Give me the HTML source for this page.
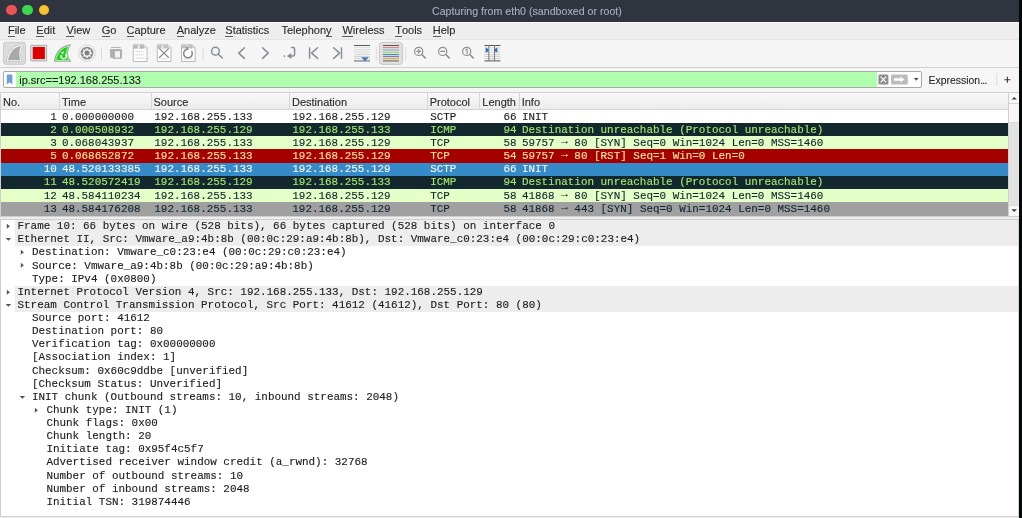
<!DOCTYPE html>
<html><head><meta charset="utf-8"><style>
*{margin:0;padding:0;box-sizing:border-box}
html,body{width:1022px;height:518px;overflow:hidden;background:#eeeeee}
body{will-change:transform}
body{position:relative;font-family:"Liberation Sans",sans-serif;font-size:11px;color:#2e2e2e}
.a{position:absolute}
.mono{font-family:"Liberation Mono",monospace;font-size:10.93px;white-space:pre;-webkit-text-stroke:0.15px}
.t{position:absolute;white-space:pre;line-height:13px;-webkit-text-stroke:0.12px}
.mi{position:absolute;top:24px;line-height:13px;color:#2b2b2b;-webkit-text-stroke:0.12px}
.mi u{text-decoration:none;border-bottom:1px solid #5a5a5a;display:inline-block;line-height:11px}
.sep{position:absolute;width:1px;background:#d6d6d6}
</style></head><body>

<div class="a" style="left:0;top:0;width:1019px;height:22px;background:#2f343f"></div>
<div class="a" style="left:0;top:22px;width:1019px;height:1px;background:#fafafa"></div>
<div class="a" style="left:6.199999999999999px;top:4.7px;width:10.8px;height:10.8px;border-radius:50%;background:#ef5252"></div>
<div class="a" style="left:22.4px;top:4.7px;width:10.8px;height:10.8px;border-radius:50%;background:#3ad84f"></div>
<div class="a" style="left:38.5px;top:4.7px;width:10.8px;height:10.8px;border-radius:50%;background:#f8c22c"></div>
<div class="t" style="left:432px;top:5px;font-size:10.65px;color:#a6b0bf">Capturing from eth0 (sandboxed or root)</div>
<div class="a" style="left:1019px;top:0;width:3px;height:518px;background:#03080a"></div>
<div class="a" style="left:0;top:23px;width:1019px;height:16px;background:#eeeeee"></div>
<div class="mi" style="left:7.9px"><u>F</u>ile</div>
<div class="mi" style="left:36.3px"><u>E</u>dit</div>
<div class="mi" style="left:66.4px"><u>V</u>iew</div>
<div class="mi" style="left:101.8px"><u>G</u>o</div>
<div class="mi" style="left:126.5px"><u>C</u>apture</div>
<div class="mi" style="left:176.7px"><u>A</u>nalyze</div>
<div class="mi" style="left:225.3px"><u>S</u>tatistics</div>
<div class="mi" style="left:281.4px">Telephon<u>y</u></div>
<div class="mi" style="left:342.4px"><u>W</u>ireless</div>
<div class="mi" style="left:395.2px"><u>T</u>ools</div>
<div class="mi" style="left:432.8px"><u>H</u>elp</div>
<div class="a" style="left:0;top:39px;width:1019px;height:1px;background:#e4e4e4"></div>
<div class="a" style="left:0;top:40px;width:1019px;height:27px;background:#f5f5f5"></div>
<div class="a" style="left:0;top:67px;width:1019px;height:1px;background:#d0d0d0"></div>
<svg class="a" style="left:0;top:0" width="520" height="68" viewBox="0 0 520 68">
<!-- pressed start button -->
<rect x="3.5" y="42.3" width="22" height="22" rx="2.2" fill="#dcdcdc" stroke="#cacaca" stroke-width="1"/>
<path d="M7.3 60.8 C8.8 52.5 13.8 46.3 22.2 44.9 C20.3 48 19.7 51 19.8 54 C19.9 57 20.4 59 21.1 60.8 Z" fill="#a9a9a9" stroke="#bdbdbd" stroke-width="2.2" stroke-linejoin="round"/>
<path d="M7.3 60.8 C8.8 52.5 13.8 46.3 22.2 44.9 C20.3 48 19.7 51 19.8 54 C19.9 57 20.4 59 21.1 60.8 Z" fill="#a9a9a9" stroke="#f7f7f7" stroke-width="1.1" stroke-linejoin="round"/>
<!-- stop -->
<rect x="30.8" y="45.3" width="15.8" height="15.6" rx="0.3" fill="#e8e8e8" stroke="#a9a9a9" stroke-width="1"/>
<rect x="32.7" y="46.9" width="12.2" height="12.2" fill="#dd0000"/>
<!-- restart green fin -->
<path d="M54.5 61.3 C55.8 52.5 61 46.2 70.4 44.8 C68 48.5 67.2 53 67.6 55.5 C67.9 58 69.5 60 70.5 61.3 Z" fill="#22d022" stroke="#a6a6a6" stroke-width="1.1" stroke-linejoin="round"/>
<path d="M55.7 60.6 C57 53 61.6 47.3 69 45.9 C66.8 49.5 66.2 53 66.6 55.5 C66.9 57.8 68 59.5 69 60.6 Z" fill="none" stroke="#ecffe6" stroke-width="0.7" stroke-linejoin="round"/>
<path d="M61.4 55 A2.6 2.6 0 1 0 65.4 54.2" fill="none" stroke="#f4fff0" stroke-width="1.4"/>
<path d="M60.6 52.2 L63.8 51.4 L63 54.6 Z" fill="#f4fff0"/>
<!-- gear -->
<circle cx="87.0" cy="53.1" r="8.3" fill="#f7f7f7" stroke="#d2d2d2" stroke-width="0.9"/>
<circle cx="87.0" cy="53.1" r="6.4" fill="#8c8c8c"/>
<path d="M85.51 49.50 L86.33 49.26 L86.44 48.03 L87.56 48.03 L87.67 49.26 L88.49 49.50 L89.24 49.91 L90.19 49.12 L90.98 49.91 L90.19 50.86 L90.60 51.61 L90.84 52.43 L92.07 52.54 L92.07 53.66 L90.84 53.77 L90.60 54.59 L90.19 55.34 L90.98 56.29 L90.19 57.08 L89.24 56.29 L88.49 56.70 L87.67 56.94 L87.56 58.17 L86.44 58.17 L86.33 56.94 L85.51 56.70 L84.76 56.29 L83.81 57.08 L83.02 56.29 L83.81 55.34 L83.40 54.59 L83.16 53.77 L81.93 53.66 L81.93 52.54 L83.16 52.43 L83.40 51.61 L83.81 50.86 L83.02 49.91 L83.81 49.12 L84.76 49.91Z" fill="#f6f6f6"/>
<circle cx="87.0" cy="53.1" r="2.5" fill="#7f7f7f"/>
<!-- separators -->
<rect x="101" y="47" width="1" height="13.5" fill="#dcdcdc"/>
<rect x="202.6" y="47" width="1" height="13.5" fill="#dcdcdc"/>
<rect x="375.8" y="47" width="1" height="13.5" fill="#dcdcdc"/>
<rect x="405.1" y="47" width="1" height="13.5" fill="#dcdcdc"/>
<!-- open -->
<rect x="111" y="47" width="9.6" height="1" fill="#b4b4b4"/>
<rect x="110" y="49" width="11.8" height="8.8" fill="#b0b0b0"/>
<rect x="113" y="51" width="8.8" height="7.8" fill="#adadad"/>
<rect x="114.8" y="51.2" width="5.2" height="6.4" fill="#f4f4f4"/>
<!-- save file -->
<g>
<path d="M133.3 44.8 H144 L147 47.8 V61.5 H133.3 Z" fill="#ffffff" stroke="#b9b9b9" stroke-width="1"/>
<rect x="133.8" y="45.3" width="10" height="3.4" fill="#b4b4b4"/>
<path d="M137 48.7 L138.6 45.3 H139.8 L139.2 48.7Z" fill="#fff"/>
<path d="M144 44.8 V47.8 H147" fill="#e6e6e6" stroke="#b9b9b9" stroke-width="0.8"/>
<g stroke="#cdcdcd" stroke-width="1.3" stroke-dasharray="1.1 0.6"><path d="M135.6 51.6 H144.4 M135.6 54.9 H144.4 M135.6 58.2 H144.4"/></g>
</g>
<!-- close file -->
<g>
<path d="M157.3 44.8 H168 L171 47.8 V61.5 H157.3 Z" fill="#ffffff" stroke="#b9b9b9" stroke-width="1"/>
<rect x="157.8" y="45.3" width="10" height="3.2" fill="#bdbdbd"/>
<path d="M161.2 48.5 L162.5 45.3 H163.6 L163 48.5Z" fill="#fff"/>
<path d="M168 44.8 V47.8 H171" fill="#e6e6e6" stroke="#b9b9b9" stroke-width="0.8"/>
<g stroke="#d6d6d6" stroke-width="1.2" stroke-dasharray="1 0.7"><path d="M159.7 58.9 H168.1"/></g>
<path d="M159.2 48.4 L168.8 57.8 M168.8 48.4 L159.2 57.8" stroke="#8c8c8c" stroke-width="1.3"/>
</g>
<!-- reload file -->
<g>
<path d="M181.5 44.8 H192.2 L195.2 47.8 V61.5 H181.5 Z" fill="#ffffff" stroke="#b9b9b9" stroke-width="1"/>
<rect x="182" y="45.3" width="10" height="3.2" fill="#bdbdbd"/>
<path d="M185.6 48.5 L186.9 45.3 H188 L187.4 48.5Z" fill="#fff"/>
<path d="M192.2 44.8 V47.8 H195.2" fill="#e6e6e6" stroke="#b9b9b9" stroke-width="0.8"/>
<g stroke="#d6d6d6" stroke-width="1.2" stroke-dasharray="1 0.7"><path d="M184 58.9 H192.4"/></g>
<path d="M191.6 51.2 A4.3 4.3 0 1 1 187.6 49.2 L186.6 46.4" fill="none" stroke="#8a8a8a" stroke-width="1.5"/>
</g>
<!-- search, nav -->
<g fill="none" stroke="#878d96" stroke-width="1.5" stroke-linecap="round" stroke-linejoin="round">
<circle cx="215.4" cy="51.2" r="3.9"/>
<path d="M218.3 54.2 L222.4 58"/>
<path d="M244.4 47.8 L238.8 53.1 L244.4 58.4"/>
<path d="M262.6 47.8 L268.2 53.1 L262.6 58.4"/>
<path d="M291.6 47.6 H293.2 Q294.6 47.6 294.6 49 V54.6 Q294.6 56 293.2 56 H290"/>
<path d="M309.6 47.3 V58.8" stroke-linecap="butt"/>
<path d="M317.6 47.8 L311.6 53.1 L317.6 58.4"/>
<path d="M341.5 47.3 V58.8" stroke-linecap="butt"/>
<path d="M333.6 47.8 L339.6 53.1 L333.6 58.4"/>
</g>
<path d="M286.9 56 L291.3 53 V59 Z" fill="#878d96"/>
<circle cx="284.4" cy="56.1" r="0.85" fill="#878d96"/>
<!-- autoscroll -->
<g>
<rect x="354" y="45" width="16" height="1" fill="#5a5a5a"/>
<g fill="#dedede"><rect x="354" y="47" width="16" height="0.9"/><rect x="354" y="49" width="16" height="0.9"/><rect x="354" y="50.6" width="16" height="0.9"/><rect x="354" y="52.2" width="16" height="0.9"/></g>
<g fill="#cfcfcf"><rect x="354" y="54.2" width="16" height="0.9"/><rect x="354" y="56" width="16" height="0.9"/><rect x="354" y="57.9" width="16" height="0.9"/></g>
<rect x="354" y="60.2" width="16" height="1.4" fill="#8c8c8c"/>
<path d="M361.2 57.2 H368.8 L365 61.2 Z" fill="#3b78c2"/>
</g>
<!-- colorize pressed -->
<rect x="379.4" y="42.4" width="23" height="22" rx="3" fill="#e0e0e0" stroke="#c6c6c6" stroke-width="1"/>
<rect x="383" y="45" width="16" height="1" fill="#555"/>
<rect x="383" y="47.1" width="16" height="1" fill="#f07575"/>
<rect x="383" y="49.2" width="16" height="1.5" fill="#a3b9d6"/>
<rect x="383" y="51.7" width="16" height="1.1" fill="#92e070"/>
<rect x="383" y="54" width="16" height="1.1" fill="#3f8ec2"/>
<rect x="383" y="56" width="16" height="1.1" fill="#9474a6"/>
<rect x="383" y="58.1" width="16" height="1.1" fill="#d8b040"/>
<rect x="383" y="60.1" width="16" height="1.6" fill="#8e8e8e"/>
<!-- zoom -->
<g fill="none" stroke="#8f8f8f" stroke-width="1.15" stroke-linecap="round">
<circle cx="418.7" cy="51.4" r="4.1"/><path d="M421.8 54.5 L425.3 58" stroke-width="1.6"/><path d="M416.9 51.4 H420.5 M418.7 49.6 V53.2" stroke-width="1.3"/>
<circle cx="442.7" cy="51.4" r="4.1"/><path d="M445.8 54.5 L449.3 58" stroke-width="1.6"/><path d="M440.9 51.4 H444.5" stroke-width="1.3"/>
<circle cx="466.7" cy="51.4" r="4.1"/><path d="M469.8 54.5 L473.3 58" stroke-width="1.6"/><path d="M465.9 49.9 L467 49.2 V53.6" stroke-width="1.1"/>
</g>
<!-- resize columns -->
<g>
<rect x="484.4" y="45" width="16" height="1" fill="#555"/>
<g fill="#dadada"><rect x="484.4" y="47.4" width="16" height="0.9"/><rect x="484.4" y="49.8" width="16" height="0.9"/><rect x="484.4" y="52.2" width="16" height="0.9"/></g>
<g fill="#cdcdcd"><rect x="484.4" y="54.3" width="16" height="0.9"/><rect x="484.4" y="56.2" width="16" height="0.9"/><rect x="484.4" y="58.2" width="16" height="0.9"/></g>
<rect x="484.4" y="60.2" width="16" height="1.3" fill="#7a7a7a"/>
<rect x="488.3" y="45" width="1" height="16" fill="#7a7a7a"/>
<rect x="494" y="45" width="1" height="16" fill="#7a7a7a"/>
<path d="M485.6 47.6 Q488.6 48.8 488.6 50.2 Q488.6 51.6 485.6 52.8Z" fill="#2f6fc0"/>
<path d="M497.4 47.6 Q494.4 48.8 494.4 50.2 Q494.4 51.6 497.4 52.8Z" fill="#2f6fc0"/>
</g>
</svg>

<div class="a" style="left:0;top:68px;width:1019px;height:24px;background:#f6f6f6"></div>
<div class="a" style="left:3px;top:71px;width:919px;height:17px;border:1px solid #a8a8a8;border-radius:2px;background:#fff"></div>
<div class="a" style="left:16.4px;top:72px;width:860.6px;height:15px;background:#afffaf"></div>
<div class="t" style="left:19.2px;top:74px;color:#1a1a1a">ip.src==192.168.255.133</div>
<div class="t" style="left:928.5px;top:74px;color:#2b2b2b;font-size:10.45px">Expression<span style="letter-spacing:-0.7px">...</span></div>
<svg class="a" style="left:0;top:66px" width="1019" height="26" viewBox="0 66 1019 26">
<path d="M6.8 74.6 H12.4 V84.6 L9.6 82.2 L6.8 84.6 Z" fill="#6f9ed6"/>
<rect x="878.4" y="74.5" width="10" height="10" rx="1.5" fill="#8c8c8c"/>
<path d="M880.6 76.7 L886.2 82.3 M886.2 76.7 L880.6 82.3" stroke="#fff" stroke-width="1.1"/>
<rect x="891" y="74.5" width="16.8" height="10" rx="1.5" fill="#bcbcbc"/>
<path d="M894 78.3 H900.5 V76.4 L904.5 79.5 L900.5 82.6 V80.7 H894 Z" fill="#fff"/>
<path d="M913.9 78 H918.6 L916.25 80.7 Z" fill="#444"/>
<rect x="996.3" y="73" width="1" height="13" fill="#dddddd"/>
<path d="M1004.4 79.7 H1010.4 M1007.4 76.7 V82.7" stroke="#3a3a3a" stroke-width="1.1"/>
</svg>

<div class="a" style="left:0;top:92px;width:1019px;height:125px;background:#ffffff;border:1px solid #cfcfcf"></div>
<div class="a" style="left:1px;top:93px;width:1007px;height:16px;background:linear-gradient(#f8f8f8,#ececec)"></div>
<div class="a" style="left:1px;top:109px;width:1007px;height:1px;background:#d3d3d3"></div>
<div class="sep" style="left:59px;top:93px;height:16px"></div>
<div class="sep" style="left:151px;top:93px;height:16px"></div>
<div class="sep" style="left:289px;top:93px;height:16px"></div>
<div class="sep" style="left:427px;top:93px;height:16px"></div>
<div class="sep" style="left:479px;top:93px;height:16px"></div>
<div class="sep" style="left:519px;top:93px;height:16px"></div>
<div class="t" style="left:3px;top:96px;color:#2b2b2b">No.</div>
<div class="t" style="left:62px;top:96px;color:#2b2b2b">Time</div>
<div class="t" style="left:153.5px;top:96px;color:#2b2b2b">Source</div>
<div class="t" style="left:292px;top:96px;color:#2b2b2b">Destination</div>
<div class="t" style="left:429.7px;top:96px;color:#2b2b2b">Protocol</div>
<div class="t" style="left:482.3px;top:96px;color:#2b2b2b">Length</div>
<div class="t" style="left:521.7px;top:96px;color:#2b2b2b">Info</div>
<div class="a" style="left:1px;top:110.000px;width:1007px;height:13.125px;background:#ffffff"></div>
<div class="t mono" style="right:965.2px;top:110.800px;color:#1c1c1c">1</div>
<div class="t mono" style="left:61.9px;top:110.800px;color:#1c1c1c">0.000000000</div>
<div class="t mono" style="left:154.3px;top:110.800px;color:#1c1c1c">192.168.255.133</div>
<div class="t mono" style="left:292.3px;top:110.800px;color:#1c1c1c">192.168.255.129</div>
<div class="t mono" style="left:430.2px;top:110.800px;color:#1c1c1c">SCTP</div>
<div class="t mono" style="right:505.5px;top:110.800px;color:#1c1c1c">66</div>
<div class="t mono" style="left:521.9px;top:110.800px;color:#1c1c1c">INIT</div>
<div class="a" style="left:1px;top:123.125px;width:1007px;height:13.125px;background:#12272e"></div>
<div class="t mono" style="right:965.2px;top:123.925px;color:#a4e46c">2</div>
<div class="t mono" style="left:61.9px;top:123.925px;color:#a4e46c">0.000508932</div>
<div class="t mono" style="left:154.3px;top:123.925px;color:#a4e46c">192.168.255.129</div>
<div class="t mono" style="left:292.3px;top:123.925px;color:#a4e46c">192.168.255.133</div>
<div class="t mono" style="left:430.2px;top:123.925px;color:#a4e46c">ICMP</div>
<div class="t mono" style="right:505.5px;top:123.925px;color:#a4e46c">94</div>
<div class="t mono" style="left:521.9px;top:123.925px;color:#a4e46c">Destination unreachable (Protocol unreachable)</div>
<div class="a" style="left:1px;top:136.250px;width:1007px;height:13.125px;background:#e4ffc7"></div>
<div class="t mono" style="right:965.2px;top:137.050px;color:#12272e">3</div>
<div class="t mono" style="left:61.9px;top:137.050px;color:#12272e">0.068043937</div>
<div class="t mono" style="left:154.3px;top:137.050px;color:#12272e">192.168.255.133</div>
<div class="t mono" style="left:292.3px;top:137.050px;color:#12272e">192.168.255.129</div>
<div class="t mono" style="left:430.2px;top:137.050px;color:#12272e">TCP</div>
<div class="t mono" style="right:505.5px;top:137.050px;color:#12272e">58</div>
<div class="t mono" style="left:521.9px;top:137.050px;color:#12272e">59757 <span style=position:relative;top:-1.7px>→</span> 80 [SYN] Seq=0 Win=1024 Len=0 MSS=1460</div>
<div class="a" style="left:1px;top:149.375px;width:1007px;height:13.125px;background:#a40000"></div>
<div class="t mono" style="right:965.2px;top:150.175px;color:#fbe596">5</div>
<div class="t mono" style="left:61.9px;top:150.175px;color:#fbe596">0.068652872</div>
<div class="t mono" style="left:154.3px;top:150.175px;color:#fbe596">192.168.255.133</div>
<div class="t mono" style="left:292.3px;top:150.175px;color:#fbe596">192.168.255.129</div>
<div class="t mono" style="left:430.2px;top:150.175px;color:#fbe596">TCP</div>
<div class="t mono" style="right:505.5px;top:150.175px;color:#fbe596">54</div>
<div class="t mono" style="left:521.9px;top:150.175px;color:#fbe596">59757 <span style=position:relative;top:-1.7px>→</span> 80 [RST] Seq=1 Win=0 Len=0</div>
<div class="a" style="left:1px;top:162.500px;width:1007px;height:13.125px;background:#358bc7"></div>
<div class="t mono" style="right:965.2px;top:163.300px;color:#f4f8fc">10</div>
<div class="t mono" style="left:61.9px;top:163.300px;color:#f4f8fc">48.520133385</div>
<div class="t mono" style="left:154.3px;top:163.300px;color:#f4f8fc">192.168.255.133</div>
<div class="t mono" style="left:292.3px;top:163.300px;color:#f4f8fc">192.168.255.129</div>
<div class="t mono" style="left:430.2px;top:163.300px;color:#f4f8fc">SCTP</div>
<div class="t mono" style="right:505.5px;top:163.300px;color:#f4f8fc">66</div>
<div class="t mono" style="left:521.9px;top:163.300px;color:#f4f8fc">INIT</div>
<div class="a" style="left:1px;top:175.625px;width:1007px;height:13.125px;background:#12272e"></div>
<div class="t mono" style="right:965.2px;top:176.425px;color:#a4e46c">11</div>
<div class="t mono" style="left:61.9px;top:176.425px;color:#a4e46c">48.520572419</div>
<div class="t mono" style="left:154.3px;top:176.425px;color:#a4e46c">192.168.255.129</div>
<div class="t mono" style="left:292.3px;top:176.425px;color:#a4e46c">192.168.255.133</div>
<div class="t mono" style="left:430.2px;top:176.425px;color:#a4e46c">ICMP</div>
<div class="t mono" style="right:505.5px;top:176.425px;color:#a4e46c">94</div>
<div class="t mono" style="left:521.9px;top:176.425px;color:#a4e46c">Destination unreachable (Protocol unreachable)</div>
<div class="a" style="left:1px;top:188.750px;width:1007px;height:13.125px;background:#e4ffc7"></div>
<div class="t mono" style="right:965.2px;top:189.550px;color:#12272e">12</div>
<div class="t mono" style="left:61.9px;top:189.550px;color:#12272e">48.584110234</div>
<div class="t mono" style="left:154.3px;top:189.550px;color:#12272e">192.168.255.133</div>
<div class="t mono" style="left:292.3px;top:189.550px;color:#12272e">192.168.255.129</div>
<div class="t mono" style="left:430.2px;top:189.550px;color:#12272e">TCP</div>
<div class="t mono" style="right:505.5px;top:189.550px;color:#12272e">58</div>
<div class="t mono" style="left:521.9px;top:189.550px;color:#12272e">41868 <span style=position:relative;top:-1.7px>→</span> 80 [SYN] Seq=0 Win=1024 Len=0 MSS=1460</div>
<div class="a" style="left:1px;top:201.875px;width:1007px;height:14.2px;background:#a0a0a0"></div>
<div class="t mono" style="right:965.2px;top:202.675px;color:#12272e">13</div>
<div class="t mono" style="left:61.9px;top:202.675px;color:#12272e">48.584176208</div>
<div class="t mono" style="left:154.3px;top:202.675px;color:#12272e">192.168.255.133</div>
<div class="t mono" style="left:292.3px;top:202.675px;color:#12272e">192.168.255.129</div>
<div class="t mono" style="left:430.2px;top:202.675px;color:#12272e">TCP</div>
<div class="t mono" style="right:505.5px;top:202.675px;color:#12272e">58</div>
<div class="t mono" style="left:521.9px;top:202.675px;color:#12272e">41868 <span style=position:relative;top:-1.7px>→</span> 443 [SYN] Seq=0 Win=1024 Len=0 MSS=1460</div>
<div class="a" style="left:1008px;top:93px;width:11px;height:123px;background:#e2e2e2;border-left:1px solid #d0d0d0"></div>
<div class="a" style="left:1009px;top:93px;width:10px;height:10.5px;background:#f8f8f8;border-bottom:1px solid #d8d8d8"></div>
<div class="a" style="left:1009px;top:104px;width:10px;height:19px;background:#f6f6f6;border-bottom:1px solid #d8d8d8"></div>
<div class="a" style="left:1009px;top:204.6px;width:10px;height:11.4px;background:#f8f8f8;border-top:1px solid #d8d8d8"></div>
<svg class="a" style="left:1009px;top:93px" width="10" height="122"><path d="M2.5 6.5 L5.2 3.9 L7.9 6.5Z" fill="#3c3c3c"/><path d="M2.5 116.3 L5.2 119 L7.9 116.3Z" fill="#3c3c3c"/></svg>
<div class="a" style="left:0;top:219px;width:1019px;height:298px;background:#ffffff;border:1px solid #cfcfcf"></div>
<div class="a" style="left:15px;top:220.000px;width:1003px;height:13.125px;background:#ededed"></div>
<div class="t mono" style="left:17.50px;top:220.200px;color:#202020">Frame 10: 66 bytes on wire (528 bits), 66 bytes captured (528 bits) on interface 0</div>
<svg class="a" style="left:4.50px;top:220.000px" width="10" height="13"><path d="M1.8 3.7 L4.9 6.2 L1.8 8.7Z" fill="#555"/></svg>
<div class="a" style="left:15px;top:233.125px;width:1003px;height:13.125px;background:#ededed"></div>
<div class="t mono" style="left:17.50px;top:233.325px;color:#202020">Ethernet II, Src: Vmware_a9:4b:8b (00:0c:29:a9:4b:8b), Dst: Vmware_c0:23:e4 (00:0c:29:c0:23:e4)</div>
<svg class="a" style="left:4.50px;top:233.125px" width="10" height="13"><path d="M0.6 4.9 L6.2 4.9 L3.4 7.7Z" fill="#555"/></svg>
<div class="t mono" style="left:31.95px;top:246.450px;color:#202020">Destination: Vmware_c0:23:e4 (00:0c:29:c0:23:e4)</div>
<svg class="a" style="left:18.95px;top:246.250px" width="10" height="13"><path d="M1.8 3.7 L4.9 6.2 L1.8 8.7Z" fill="#555"/></svg>
<div class="t mono" style="left:31.95px;top:259.575px;color:#202020">Source: Vmware_a9:4b:8b (00:0c:29:a9:4b:8b)</div>
<svg class="a" style="left:18.95px;top:259.375px" width="10" height="13"><path d="M1.8 3.7 L4.9 6.2 L1.8 8.7Z" fill="#555"/></svg>
<div class="t mono" style="left:31.95px;top:272.700px;color:#202020">Type: IPv4 (0x0800)</div>
<div class="a" style="left:15px;top:285.625px;width:1003px;height:13.125px;background:#ededed"></div>
<div class="t mono" style="left:17.50px;top:285.825px;color:#202020">Internet Protocol Version 4, Src: 192.168.255.133, Dst: 192.168.255.129</div>
<svg class="a" style="left:4.50px;top:285.625px" width="10" height="13"><path d="M1.8 3.7 L4.9 6.2 L1.8 8.7Z" fill="#555"/></svg>
<div class="a" style="left:15px;top:298.750px;width:1003px;height:13.125px;background:#ededed"></div>
<div class="t mono" style="left:17.50px;top:298.950px;color:#202020">Stream Control Transmission Protocol, Src Port: 41612 (41612), Dst Port: 80 (80)</div>
<svg class="a" style="left:4.50px;top:298.750px" width="10" height="13"><path d="M0.6 4.9 L6.2 4.9 L3.4 7.7Z" fill="#555"/></svg>
<div class="t mono" style="left:31.95px;top:312.075px;color:#202020">Source port: 41612</div>
<div class="t mono" style="left:31.95px;top:325.200px;color:#202020">Destination port: 80</div>
<div class="t mono" style="left:31.95px;top:338.325px;color:#202020">Verification tag: 0x00000000</div>
<div class="t mono" style="left:31.95px;top:351.450px;color:#202020">[Association index: 1]</div>
<div class="t mono" style="left:31.95px;top:364.575px;color:#202020">Checksum: 0x60c9ddbe [unverified]</div>
<div class="t mono" style="left:31.95px;top:377.700px;color:#202020">[Checksum Status: Unverified]</div>
<div class="t mono" style="left:31.95px;top:390.825px;color:#202020">INIT chunk (Outbound streams: 10, inbound streams: 2048)</div>
<svg class="a" style="left:18.95px;top:390.625px" width="10" height="13"><path d="M0.6 4.9 L6.2 4.9 L3.4 7.7Z" fill="#555"/></svg>
<div class="t mono" style="left:46.40px;top:403.950px;color:#202020">Chunk type: INIT (1)</div>
<svg class="a" style="left:33.40px;top:403.750px" width="10" height="13"><path d="M1.8 3.7 L4.9 6.2 L1.8 8.7Z" fill="#555"/></svg>
<div class="t mono" style="left:46.40px;top:417.075px;color:#202020">Chunk flags: 0x00</div>
<div class="t mono" style="left:46.40px;top:430.200px;color:#202020">Chunk length: 20</div>
<div class="t mono" style="left:46.40px;top:443.325px;color:#202020">Initiate tag: 0x95f4c5f7</div>
<div class="t mono" style="left:46.40px;top:456.450px;color:#202020">Advertised receiver window credit (a_rwnd): 32768</div>
<div class="t mono" style="left:46.40px;top:469.575px;color:#202020">Number of outbound streams: 10</div>
<div class="t mono" style="left:46.40px;top:482.700px;color:#202020">Number of inbound streams: 2048</div>
<div class="t mono" style="left:46.40px;top:495.825px;color:#202020">Initial TSN: 319874446</div>
</body></html>
